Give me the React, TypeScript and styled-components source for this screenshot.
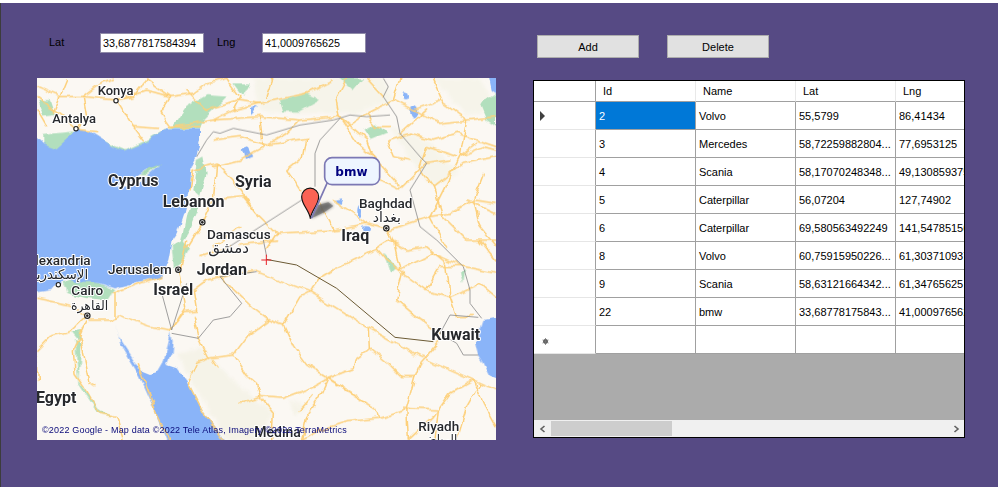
import React from "react";
import styled, { createGlobalStyle } from "styled-components";

const GlobalStyle = createGlobalStyle`
  html, body { margin: 0; padding: 0; background: #3c3c3c; }
  body { font-family: "Liberation Sans", Arial, sans-serif; font-size: 11px; color: #000; overflow: hidden; }
`;

const Frame = styled.div`
  width: 998px;
  height: 487px;
  display: flex;
  flex-direction: column;
`;
const TitleEdge = styled.div`
  height: 3px;
  background: #fff;
`;
const Window = styled.main`
  flex: 1;
  margin-left: 1px;
  background: #564a84;
  padding: 30px 0 0 36px;
  display: flex;
  gap: 37px;
  align-items: flex-start;
`;
const LeftColumn = styled.section`
  width: 459px;
  display: flex;
  flex-direction: column;
  gap: 25px;
`;
const Fields = styled.div`
  height: 20px;
  padding-left: 12px;
  display: flex;
  align-items: center;
`;
const FieldLabel = styled.label<{ $width: number }>`
  width: ${(p) => p.$width}px;
  margin-top: -3px;
  color: #000;
`;
const FieldInput = styled.input`
  box-sizing: border-box;
  width: 104px;
  height: 20px;
  margin-right: 13px;
  padding: 0 2px;
  border: 1px solid #8f8aa8;
  border-radius: 0;
  background: #fff;
  color: #000;
  font: 10.8px "Liberation Sans", Arial, sans-serif;
  outline: none;
`;
const MapBox = styled.div`
  width: 459px;
  height: 362px;
  background: #fbf8f3;
  overflow: hidden;
`;
const MapSvg = styled.svg`
  display: block;
  width: 459px;
  height: 362px;
`;
const RightColumn = styled.section`
  width: 432px;
  margin-top: 2px;
  display: flex;
  flex-direction: column;
  gap: 22px;
`;
const Buttons = styled.div`
  padding-left: 4px;
  display: flex;
  gap: 28px;
`;
const ActionButton = styled.button`
  box-sizing: border-box;
  width: 102px;
  height: 23px;
  padding: 0;
  background: #e1e1e1;
  border: 1px solid #adadad;
  border-radius: 0;
  color: #000;
  font: 11px "Liberation Sans", Arial, sans-serif;
`;
const GridBox = styled.div`
  box-sizing: border-box;
  width: 432px;
  height: 358px;
  border: 1px solid #000;
  background: #ababab;
  display: flex;
  flex-direction: column;
  overflow: hidden;
`;
const Rows = styled.div`
  flex: 1;
  overflow: hidden;
`;
const Row = styled.div<{ $header?: boolean }>`
  display: grid;
  grid-template-columns: 62px repeat(5, 100px);
  width: 562px;
  height: ${(p) => (p.$header ? 21 : 28)}px;
  background: #fff;
`;
const RowHead = styled.div`
  box-sizing: border-box;
  border-right: 1px solid #a0a0a0;
  border-bottom: 1px solid #e6e6e6;
  display: flex;
  align-items: center;
`;
const HeaderCorner = styled(RowHead)`
  border-bottom-color: #a0a0a0;
`;
const HeaderCell = styled.div`
  box-sizing: border-box;
  padding: 0 0 1px 7px;
  border-right: 1px solid #e9e9e9;
  border-bottom: 1px solid #a0a0a0;
  display: flex;
  align-items: center;
`;
const Cell = styled.div<{ $selected?: boolean }>`
  box-sizing: border-box;
  padding: 0 0 0 3px;
  border-right: 1px solid #a0a0a0;
  border-bottom: 1px solid #a0a0a0;
  background: ${(p) => (p.$selected ? "#0078d7" : "#fff")};
  color: ${(p) => (p.$selected ? "#fff" : "#000")};
  display: flex;
  align-items: center;
  white-space: nowrap;
  overflow: hidden;
`;
const CurrentArrow = styled.span`
  margin-left: 6px;
  width: 0;
  height: 0;
  border-left: 5px solid #404040;
  border-top: 5px solid transparent;
  border-bottom: 5px solid transparent;
`;
const NewRowGlyph = styled.svg`
  margin: 3px 0 0 8px;
  width: 7px;
  height: 7px;
`;
const ScrollBar = styled.div`
  height: 17px;
  flex: none;
  background: #f0f0f0;
  display: flex;
  align-items: stretch;
`;
const ScrollArrow = styled.div`
  width: 17px;
  flex: none;
  display: flex;
  align-items: center;
  justify-content: center;
`;
const ScrollTrack = styled.div`
  flex: 1;
  padding-top: 1px;
`;
const ScrollThumb = styled.div`
  width: 121px;
  height: 15px;
  background: #cdcdcd;
`;

const Label = styled.text<{ $size: number; $weight: number }>`
  font-family: Roboto, "DejaVu Sans", sans-serif;
  font-size: ${(p) => p.$size * 3}px;
  font-weight: ${(p) => p.$weight};
  fill: #26282c;
  stroke: #fff;
  stroke-width: 6px;
  stroke-linejoin: round;
  paint-order: stroke;
`;
const Credit = styled.text`
  font-family: "Liberation Sans", Arial, sans-serif;
  font-size: 27px;
  fill: #0a0a7a;
`;
const PinLabel = styled.text`
  font-family: "DejaVu Sans", sans-serif;
  font-size: 36px;
  font-weight: 700;
  fill: #00007f;
`;

const topGreen = [
  "111,300 150,300 165,345 130,350",
  "520,380 560,320 620,285 680,290 610,360 600,385 505,385",
  "130,405 165,400 215,395 260,400 340,435 375,450 430,425 500,385 505,400 440,445 370,470 300,430 230,410 170,450 130,440",
  "590,480 610,470 620,520 600,590 580,570",
  "840,300 920,280 960,300 900,335 850,335",
  "1090,390 1130,370 1160,400 1110,420",
  "700,250 750,250 730,290",
  "1440,310 1488,280 1488,380 1460,360",
  "1020,235 1090,235 1060,270",
  "560,640 575,600 600,620 570,690 540,740",
];
const topTerrain = [
  "760,235 1150,235 1180,300 1060,340 900,340 780,330",
  "1170,380 1280,420 1380,520 1300,560 1230,480",
  "1300,235 1440,235 1488,320 1400,350",
];
const topRoads = [
  "111,290 160,330 228,388 290,395",
  "200,240 180,290 160,340",
  "250,290 350,300 400,380 430,420",
  "350,300 440,270 510,290 580,280",
  "440,240 510,290 480,340 510,380 600,380",
  "510,380 640,360 780,350 900,360 1020,350",
  "680,235 720,290 700,330 640,360",
  "780,350 785,400 790,440 720,480 640,500",
  "640,420 720,410 800,435 920,415 910,470 860,510 900,570",
  "580,510 650,490 640,600 610,665 560,745",
  "640,600 730,590 770,640 830,700 1000,690 1100,670 1165,690",
  "1000,690 960,610 910,570",
  "1165,690 1290,650 1380,470 1430,430",
  "1140,540 1200,570 1280,490 1350,480",
  "1020,350 1040,380 1080,440 1120,470 1200,560",
  "1200,235 1180,300 1240,330 1320,300",
  "1300,240 1330,310 1400,360 1488,350",
  "1488,470 1390,490 1300,560 1330,650 1400,720 1488,720",
  "1000,600 1060,640 1100,670",
  "920,280 780,310 700,330",
  "820,235 800,290",
  "1040,235 1010,290 1020,350",
  "1180,300 1100,340 1040,380",
  "1230,400 1300,420 1370,400 1488,440",
  "1165,690 1190,745",
  "1290,650 1340,745",
  "1400,600 1488,640",
  "111,330 140,380",
  "560,270 620,330",
  "720,680 640,740",
  "830,700 800,745",
  "1290,650 1350,640 1420,600 1488,610",
  "1380,470 1450,440 1488,450",
  "1300,560 1260,500 1280,440 1370,470",
  "1230,480 1180,470 1160,420 1230,400",
  "1100,340 1130,380 1170,380",
  "1400,360 1380,470",
  "1450,520 1420,600 1440,680 1488,740",
  "111,260 180,290 250,290 300,250 340,235",
  "250,290 260,350 228,388",
  "400,380 470,385",
  "440,240 400,290 350,300",
  "580,280 620,250 680,235",
  "620,330 710,300 780,310",
  "920,280 1000,240",
  "900,360 860,400 800,435",
  "1020,350 1100,420 1140,540",
  "650,490 700,540 770,640",
  "580,510 570,570",
  "1240,330 1320,370 1400,360",
  "1200,400 1280,330",
  "1100,235 1150,290",
];
const bottomRoads = [
  "770,95 930,155 1100,260 1260,350 1420,420 1488,450",
  "660,110 760,205 805,240 850,255",
  "850,255 880,320 920,375 985,415 1130,510 1140,535 1230,505",
  "700,345 745,285 805,240",
  "700,345 620,355 590,370 565,430 610,520 670,600",
  "700,345 740,405 770,430 780,470 820,520 815,600",
  "720,490 780,470 850,475 940,440 985,415 1060,385 1065,360 1110,325 1165,370 1205,410 1245,410",
  "1105,265 1108,325",
  "850,255 900,170 930,155 960,115 1000,90 1130,25 1170,0",
  "1245,410 1260,370 1320,300",
  "1245,410 1220,500 1225,600",
  "1135,535 1040,545 960,570 905,600",
  "985,415 960,470 920,530 905,600",
  "1315,510 1350,460 1420,420",
  "1315,510 1305,600",
  "1420,420 1450,490 1488,560",
  "1440,430 1400,500 1370,600",
  "515,270 555,215 590,210 580,150",
  "595,295 625,355",
  "580,230 595,295",
  "515,270 455,260 360,225 330,240 270,240",
  "111,175 210,195 260,225",
  "260,225 215,270 150,290 111,330",
  "260,240 220,330 225,400 260,450 300,520 350,530 370,600",
  "240,290 270,430 285,440",
  "345,160 345,230",
  "560,0 540,100 560,200 515,270",
  "720,15 830,0",
  "600,50 690,20",
  "415,370 470,520 510,600",
  "1130,25 1160,60 1210,100 1280,150 1350,170",
  "1180,0 1200,90 1300,40 1390,80",
  "1350,170 1440,130 1488,170",
  "1440,0 1488,60",
  "640,360 655,380",
  "900,510 940,465",
  "1170,0 1220,30 1280,20 1340,70 1350,170",
  "1210,100 1190,180 1250,230 1320,280",
  "1350,170 1370,230 1420,230",
  "1280,150 1320,80 1390,80 1488,100",
  "985,415 1040,450 1100,490",
  "1225,600 1300,530 1315,510",
  "1315,510 1210,505",
  "111,350 115,420",
  "580,150 620,120 700,100 770,95",
  "340,160 420,130 480,110",
];
const bottomGreen = [
  "190,130 230,115 300,130 345,150 325,180 260,175 200,160",
  "515,20 550,0 570,25 545,70 522,85",
  "215,275 245,270 235,300",
  "225,300 245,310 235,420 300,510 340,530 295,520 235,430",
  "1150,40 1190,80 1170,100",
  "1380,100 1395,90 1390,130",
];
const bottomTerrain = [
  "530,340 600,320 700,420 820,520 790,600 680,600 590,450",
  "870,480 920,500 880,530",
];

const RoadSet = ({ items }: { items: string[] }) => (
  <g fill="none" stroke="#fdd07a" strokeWidth="4.5" strokeLinejoin="round" strokeLinecap="round">
    {items.map((p) => (
      <polyline key={p} points={p} />
    ))}
  </g>
);
const Shapes = ({ items, fill }: { items: string[]; fill: string }) => (
  <g fill={fill}>
    {items.map((p) => (
      <polygon key={p} points={p} />
    ))}
  </g>
);

const MapDrawing = () => (
  <MapSvg viewBox="111 234 1377 1086" aria-label="Map">
    <defs>
      <filter
        id="wobble"
        filterUnits="userSpaceOnUse"
        x="60"
        y="180"
        width="1480"
        height="1200"
        colorInterpolationFilters="sRGB"
      >
        <feTurbulence type="fractalNoise" baseFrequency="0.028" numOctaves="2" seed="4" />
        <feDisplacementMap in="SourceGraphic" scale="20" xChannelSelector="R" yChannelSelector="G" />
      </filter>
      <filter id="soft" x="-30%" y="-30%" width="160%" height="160%">
        <feGaussianBlur stdDeviation="5" />
      </filter>
    </defs>
    <rect x="111" y="234" width="1377" height="1086" fill="#fbf8f3" />
    <g filter="url(#wobble)">
      <g filter="url(#soft)">
        <Shapes items={topTerrain} fill="#f6f4ea" />
        <g transform="translate(0,720)">
          <Shapes items={bottomTerrain} fill="#f5f3e8" />
        </g>
      </g>
      <Shapes items={topGreen} fill="#b2dfbd" />
      <g transform="translate(0,720)">
        <Shapes items={bottomGreen} fill="#b2dfbd" />
      </g>
      {/* Mediterranean */}
      <polygon
        fill="#8ab4f8"
        points="90,390 130,430 170,445 220,400 228,388 270,395 340,440 370,455 430,430 500,385 570,385 600,385 600,420 590,470 575,500 570,560 550,640 530,700 516,720 505,780 480,830 420,845 345,865 300,850 200,840 150,870 90,880"
      />
      <polygon fill="#fbf8f3" points="335,560 400,560 440,530 480,495 440,510 395,540" />
      <polygon fill="#a9dab5" points="440,525 485,490 450,505 420,525" />
      <g transform="translate(0,720)">
        {/* Red Sea */}
        <polygon
          fill="#8ab4f8"
          points="345,245 355,290 420,390 450,402 475,395 490,370 512,275 518,300 515,340 500,375 530,385 570,440 610,520 690,620 510,620 465,510 420,410 395,370 360,310"
        />
        {/* Gulf */}
        <polygon
          fill="#8ab4f8"
          points="1510,230 1450,240 1440,270 1425,310 1435,345 1450,370 1470,410 1510,425"
        />
      </g>
      {/* lakes */}
      <g fill="#8ab4f8">
        <polygon points="1465,220 1510,220 1510,295 1475,270" />
        <ellipse cx="1240" cy="335" rx="12" ry="20" />
        <ellipse cx="1218" cy="288" rx="9" ry="13" />
        <polygon points="725,450 745,440 760,470 735,480" />
        <polygon points="1000,600 1030,595 1025,612" />
        <ellipse cx="1082" cy="635" rx="7" ry="16" />
        <ellipse cx="1098" cy="685" rx="12" ry="7" />
        <polygon points="750,325 775,320 750,345" />
      </g>
      <RoadSet items={topRoads} />
      <g transform="translate(0,720)">
        <RoadSet items={bottomRoads} />
      </g>
    </g>
    {/* borders */}
    <g fill="none" stroke="#8b8b8b" strokeWidth="2.5">
      <polyline points="590,470 620,420 640,395 660,400 700,385 800,405 900,375 1000,360 1050,345 1100,350 1170,345" />
      <polyline points="1020,355 960,420 945,460 945,560" />
      <polyline points="905,600 680,745" />
      <polyline points="1150,235 1165,260 1150,290 1190,350 1200,400 1260,470 1280,490 1230,570 1260,680 1310,720" />
      <g transform="translate(0,720)">
        <polyline points="1310,0 1390,80 1410,150 1410,190 1445,235" />
        <polyline points="1435,232 1350,225 1320,280 1370,310 1390,345 1435,345" />
        <polyline points="660,110 725,190 690,230 640,240 595,295 515,280" />
        <polyline points="480,140 515,270" />
        <polyline points="515,270 560,130" />
        <polyline points="770,95 660,110" />
        <polyline points="800,50 790,0" />
      </g>
    </g>
    <g transform="translate(0,720)">
      {/* route */}
      <polyline
        fill="none"
        stroke="#6b5a34"
        strokeWidth="3"
        points="798,58 890,75 1010,145 1185,292 1300,305"
      />
      <path d="M784 60H814M799 44V75" stroke="#e8222a" strokeWidth="3" fill="none" />
    </g>
    {/* city dots */}
    <g fill="#fff" stroke="#222" strokeWidth="3.5">
      <circle cx="348" cy="302" r="6.5" />
      <circle cx="228" cy="386" r="6.5" />
      <circle cx="175" cy="854" r="6.5" />
      <circle cx="607" cy="667" r="8" />
      <circle cx="1159" cy="685" r="8" />
      <circle cx="535" cy="809" r="8" />
      <circle cx="262" cy="947" r="8" />
    </g>
    <g fill="#222">
      <circle cx="607" cy="667" r="4" />
      <circle cx="1159" cy="685" r="4" />
      <circle cx="535" cy="809" r="4" />
      <circle cx="262" cy="947" r="4" />
    </g>
    <Label x="293" y="284" $size={13} $weight={500}>Konya</Label>
    <Label x="157" y="368" $size={13} $weight={500}>Antalya</Label>
    <Label x="324" y="558" $size={16} $weight={700}>Cyprus</Label>
    <Label x="705" y="560" $size={16} $weight={700}>Syria</Label>
    <Label x="488" y="620" $size={16} $weight={700}>Lebanon</Label>
    <Label x="621" y="716" $size={13.5} $weight={500}>Damascus</Label>
    <Label x="1077" y="624" $size={13.5} $weight={500}>Baghdad</Label>
    <Label x="1118" y="665" $size={14} $weight={400}>بغداد</Label>
    <Label x="1024" y="722" $size={16} $weight={700}>Iraq</Label>
    <Label x="625" y="758" $size={15} $weight={400}>دمشق</Label>
    <Label x="590" y="825" $size={16} $weight={700}>Jordan</Label>
    <Label x="324" y="823" $size={13.5} $weight={500}>Jerusalem</Label>
    <Label x="460" y="885" $size={16} $weight={700}>Israel</Label>
    <Label x="272" y="795" textAnchor="end" $size={13.5} $weight={500}>Alexandria</Label>
    <Label x="265" y="836" textAnchor="end" $size={13.5} $weight={400}>الإسكندرية</Label>
    <Label x="214" y="885" $size={13.5} $weight={500}>Cairo</Label>
    <Label x="325" y="930" textAnchor="end" $size={12.5} $weight={400}>القاهرة</Label>
    <Label x="108" y="1208" $size={16} $weight={700}>Egypt</Label>
    <Label x="1294" y="1020" $size={16} $weight={700}>Kuwait</Label>
    <Label x="1255" y="1294" $size={13.5} $weight={500}>Riyadh</Label>
    <Label x="1372" y="1330" textAnchor="end" $size={12} $weight={400}>الرياض</Label>
    <Label x="763" y="1311" $size={14} $weight={500}>Medina</Label>
    <Credit x="126" y="1300" textLength="914">©2022 Google - Map data ©2022 Tele Atlas, Imagery ©2022 TerraMetrics</Credit>
    {/* marker */}
    <polygon points="935,655 955,615 985,607 1000,618 975,635" fill="#555" opacity="0.8" filter="url(#soft)" />
    <polygon points="935,655 955,615 985,607 1000,618 975,635" fill="#666" opacity="0.55" />
    <path
      d="M931 656 C928 630 905 615 905 590 A25 25 0 0 1 956 590 C956 615 934 630 931 656Z"
      fill="#fb6354"
      stroke="#111"
      strokeWidth="3.5"
    />
    <path d="M934 655 L982 548" stroke="#7c78b4" strokeWidth="5" fill="none" />
    <rect x="974" y="473" width="165" height="81" rx="22" fill="#eef5ff" stroke="#7c78b4" strokeWidth="5" />
    <PinLabel x="1006" y="528">bmw</PinLabel>
  </MapSvg>
);

const data = [
  ["2", "Volvo", "55,5799", "86,41434"],
  ["3", "Mercedes", "58,72259882804...", "77,6953125"],
  ["4", "Scania", "58,17070248348...", "49,130859375"],
  ["5", "Caterpillar", "56,07204", "127,74902"],
  ["6", "Caterpillar", "69,580563492249", "141,54785156"],
  ["8", "Volvo", "60,75915950226...", "61,303710937"],
  ["9", "Scania", "58,63121664342...", "61,34765625"],
  ["22", "bmw", "33,68778175843...", "41,000976562"],
];

export default function App() {
  return (
    <Frame>
      <GlobalStyle />
      <TitleEdge />
      <Window>
        <LeftColumn>
          <Fields>
            <FieldLabel $width={51}>Lat</FieldLabel>
            <FieldInput readOnly value="33,6877817584394" />
            <FieldLabel $width={45}>Lng</FieldLabel>
            <FieldInput readOnly value="41,0009765625" />
          </Fields>
          <MapBox>
            <MapDrawing />
          </MapBox>
        </LeftColumn>
        <RightColumn>
          <Buttons>
            <ActionButton>Add</ActionButton>
            <ActionButton>Delete</ActionButton>
          </Buttons>
          <GridBox>
            <Rows>
              <Row $header>
                <HeaderCorner />
                {["Id", "Name", "Lat", "Lng", ""].map((h) => (
                  <HeaderCell key={h}>{h}</HeaderCell>
                ))}
              </Row>
              {data.map((r, i) => (
                <Row key={r[0]}>
                  <RowHead>{i === 0 && <CurrentArrow />}</RowHead>
                  {r.map((c, j) => (
                    <Cell key={j} $selected={i === 0 && j === 0}>
                      {c}
                    </Cell>
                  ))}
                  <Cell />
                </Row>
              ))}
              <Row>
                <RowHead>
                  <NewRowGlyph viewBox="0 0 7 7">
                    <circle cx="3.5" cy="3.5" r="2.4" fill="#555" />
                    <path d="M3.5 0V7M0.5 2L6.5 5M6.5 2L0.5 5" stroke="#777" strokeWidth="0.8" />
                  </NewRowGlyph>
                </RowHead>
                <Cell />
                <Cell />
                <Cell />
                <Cell />
                <Cell />
              </Row>
            </Rows>
            <ScrollBar>
              <ScrollArrow>
                <svg width="8" height="8" viewBox="0 0 8 8">
                  <path d="M5.5 1L2 4L5.5 7" fill="none" stroke="#606060" strokeWidth="1.6" />
                </svg>
              </ScrollArrow>
              <ScrollTrack>
                <ScrollThumb />
              </ScrollTrack>
              <ScrollArrow>
                <svg width="8" height="8" viewBox="0 0 8 8">
                  <path d="M2.5 1L6 4L2.5 7" fill="none" stroke="#606060" strokeWidth="1.6" />
                </svg>
              </ScrollArrow>
            </ScrollBar>
          </GridBox>
        </RightColumn>
      </Window>
    </Frame>
  );
}
